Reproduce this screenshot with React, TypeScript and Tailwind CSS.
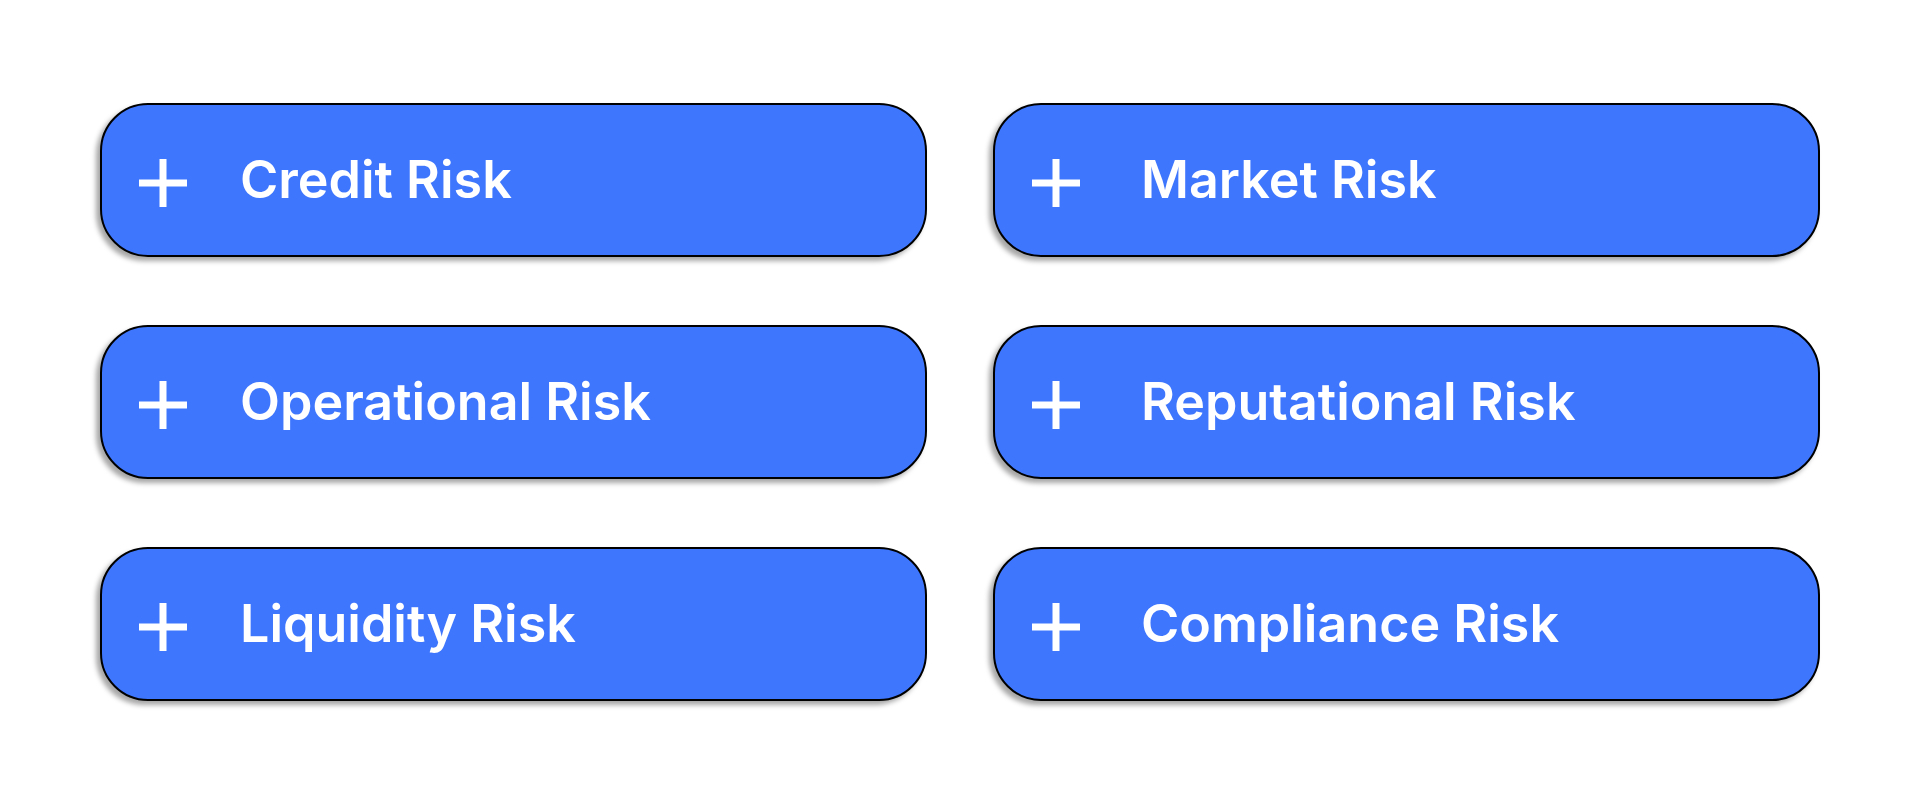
const risks = [
  'Credit Risk',
  'Market Risk',
  'Operational Risk',
  'Reputational Risk',
  'Liquidity Risk',
  'Compliance Risk',
];

function PlusIcon() {
  return (
    <svg width="48" height="48" viewBox="0 0 48 48" className="mt-[6px] shrink-0" fill="none">
      <path d="M24 0v48M0 24h48" stroke="white" strokeWidth="7" />
    </svg>
  );
}

export default function App() {
  return (
    <div className="min-h-[802px] w-full bg-white px-[100px] pt-[103px]" style={{ fontFamily: 'Inter, "Noto Sans", sans-serif' }}>
      <div className="grid grid-cols-2 gap-x-[66px] gap-y-[68px]">
        {risks.map((label, i) => (
          <button
            key={label}
            className={
              'flex h-[154px] items-center rounded-[48px] border-2 border-black bg-[#3e76fe] pl-[37px] text-left shadow-[-4px_4px_5px_rgba(0,0,0,0.35)] ' +
              (i % 2 === 0 ? 'gap-[53px]' : 'gap-[61px]')
            }
          >
            <PlusIcon />
            <span className="text-[52px] font-semibold leading-none text-white">{label}</span>
          </button>
        ))}
      </div>
    </div>
  );
}
